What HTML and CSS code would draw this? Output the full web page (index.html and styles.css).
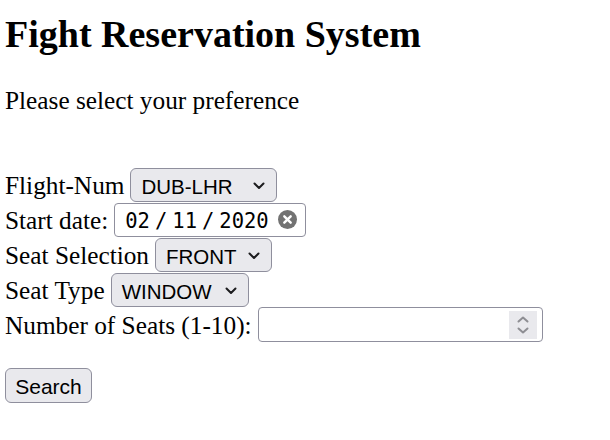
FILE: index.html
```html
<!DOCTYPE html>
<html>
<head>
<meta charset="utf-8">
<title>Fight Reservation System</title>
<link rel="stylesheet" href="styles.css">
</head>
<body>
<h1 class="title">Fight Reservation System</h1>
<p class="intro">Please select your preference</p>
<form class="form">
  <div class="row">
    <label class="label">Flight-Num</label>
    <span class="select w-flight">
      <span class="select-text">DUB-LHR</span>
      <svg class="chev" width="12" height="8" viewBox="0 0 12 8"><path d="M1.5 1.5 L6 6 L10.5 1.5" fill="none" stroke="#1c1c1e" stroke-width="2" stroke-linecap="round" stroke-linejoin="round"/></svg>
    </span>
  </div>
  <div class="row">
    <label class="label">Start date:</label>
    <span class="datebox">
      <span class="date-text">
        <span class="dpart">02</span>
        <span class="dsep">/</span>
        <span class="dpart">11</span>
        <span class="dsep">/</span>
        <span class="dpart">2020</span>
      </span>
      <svg class="clear" width="19" height="19" viewBox="0 0 19 19"><circle cx="9.5" cy="9.5" r="9.5" fill="#727272"/><path d="M6.3 6.3 L12.7 12.7 M12.7 6.3 L6.3 12.7" stroke="#fff" stroke-width="2.4" stroke-linecap="round"/></svg>
    </span>
  </div>
  <div class="row">
    <label class="label">Seat Selection</label>
    <span class="select w-front">
      <span class="select-text">FRONT</span>
      <svg class="chev" width="12" height="8" viewBox="0 0 12 8"><path d="M1.5 1.5 L6 6 L10.5 1.5" fill="none" stroke="#1c1c1e" stroke-width="2" stroke-linecap="round" stroke-linejoin="round"/></svg>
    </span>
  </div>
  <div class="row">
    <label class="label">Seat Type</label>
    <span class="select w-window">
      <span class="select-text">WINDOW</span>
      <svg class="chev" width="12" height="8" viewBox="0 0 12 8"><path d="M1.5 1.5 L6 6 L10.5 1.5" fill="none" stroke="#1c1c1e" stroke-width="2" stroke-linecap="round" stroke-linejoin="round"/></svg>
    </span>
  </div>
  <div class="row">
    <label class="label">Number of Seats (1-10):</label>
    <span class="numbox">
      <input class="num-input" type="text" aria-label="Number of Seats">
      <span class="spinner">
        <svg width="28" height="28" viewBox="0 0 28 28"><path d="M9.5 10.5 L14 6.5 L18.5 10.5" fill="none" stroke="#8e8e93" stroke-width="2" stroke-linecap="round" stroke-linejoin="round"/><path d="M9.5 17.5 L14 21.5 L18.5 17.5" fill="none" stroke="#8e8e93" stroke-width="2" stroke-linecap="round" stroke-linejoin="round"/></svg>
      </span>
    </span>
  </div>
  <button class="btn" type="button">Search</button>
</form>
</body>
</html>
```

FILE: styles.css
```css
html, body {
  margin: 0;
  padding: 0;
  background: #ffffff;
}
body {
  padding-left: 5px;
  font-family: "Liberation Serif", "Times New Roman", serif;
  color: #000;
}
.title {
  margin: 12px 0 0;
  font-size: 38px;
  line-height: 44px;
  font-weight: bold;
}
.intro {
  margin: 30px 0 0;
  font-size: 25.3px;
  line-height: 28px;
}
.form {
  margin: 53px 0 0;
  display: flex;
  flex-direction: column;
  align-items: flex-start;
}
.row {
  display: flex;
  align-items: center;
  gap: 6px;
  height: 35px;
}
.label {
  font-size: 25.3px;
  line-height: 28px;
}
.select {
  box-sizing: border-box;
  height: 34px;
  display: flex;
  align-items: center;
  justify-content: space-between;
  padding: 0 11px 0 10px;
  background: #e9e9ed;
  border: 1px solid #8f8f9d;
  border-radius: 6px;
  font-family: "Liberation Sans", Arial, sans-serif;
  font-size: 20.5px;
  color: #000;
}
.select-text {
  line-height: 24px;
  padding-top: 5px;
}
.w-flight { width: 147px; }
.w-front { width: 117px; }
.w-window { width: 138px; }
.chev {
  display: block;
  margin-top: 2px;
}
.datebox {
  box-sizing: border-box;
  width: 192px;
  height: 34px;
  display: flex;
  align-items: center;
  justify-content: space-between;
  padding: 0 8px 0 10px;
  background: #fff;
  border: 1px solid #8f8f9d;
  border-radius: 4px;
}
.date-text {
  display: flex;
  align-items: center;
  gap: 5px;
  font-family: "DejaVu Sans Mono", "Liberation Mono", monospace;
  font-size: 20.5px;
  line-height: 24px;
  padding-top: 2px;
}
.clear {
  display: block;
}
.numbox {
  box-sizing: border-box;
  width: 285px;
  height: 35px;
  display: flex;
  align-items: center;
  background: #fff;
  border: 1px solid #8f8f9d;
  border-radius: 4px;
  padding: 0 5px 0 4px;
}
.num-input {
  flex: 1;
  min-width: 0;
  border: 0;
  outline: none;
  background: transparent;
  font-family: "Liberation Sans", Arial, sans-serif;
  font-size: 20px;
  padding: 0;
}
.spinner {
  display: block;
  width: 28px;
  height: 28px;
  background: #e9e9ed;
}
.spinner svg {
  display: block;
}
.btn {
  margin-top: 26px;
  box-sizing: border-box;
  width: 87px;
  height: 35px;
  padding: 2px 0 0;
  background: #e9e9ed;
  border: 1px solid #8f8f9d;
  border-radius: 6px;
  font-family: "Liberation Sans", Arial, sans-serif;
  font-size: 21px;
  color: #000;
  line-height: 24px;
}
```
